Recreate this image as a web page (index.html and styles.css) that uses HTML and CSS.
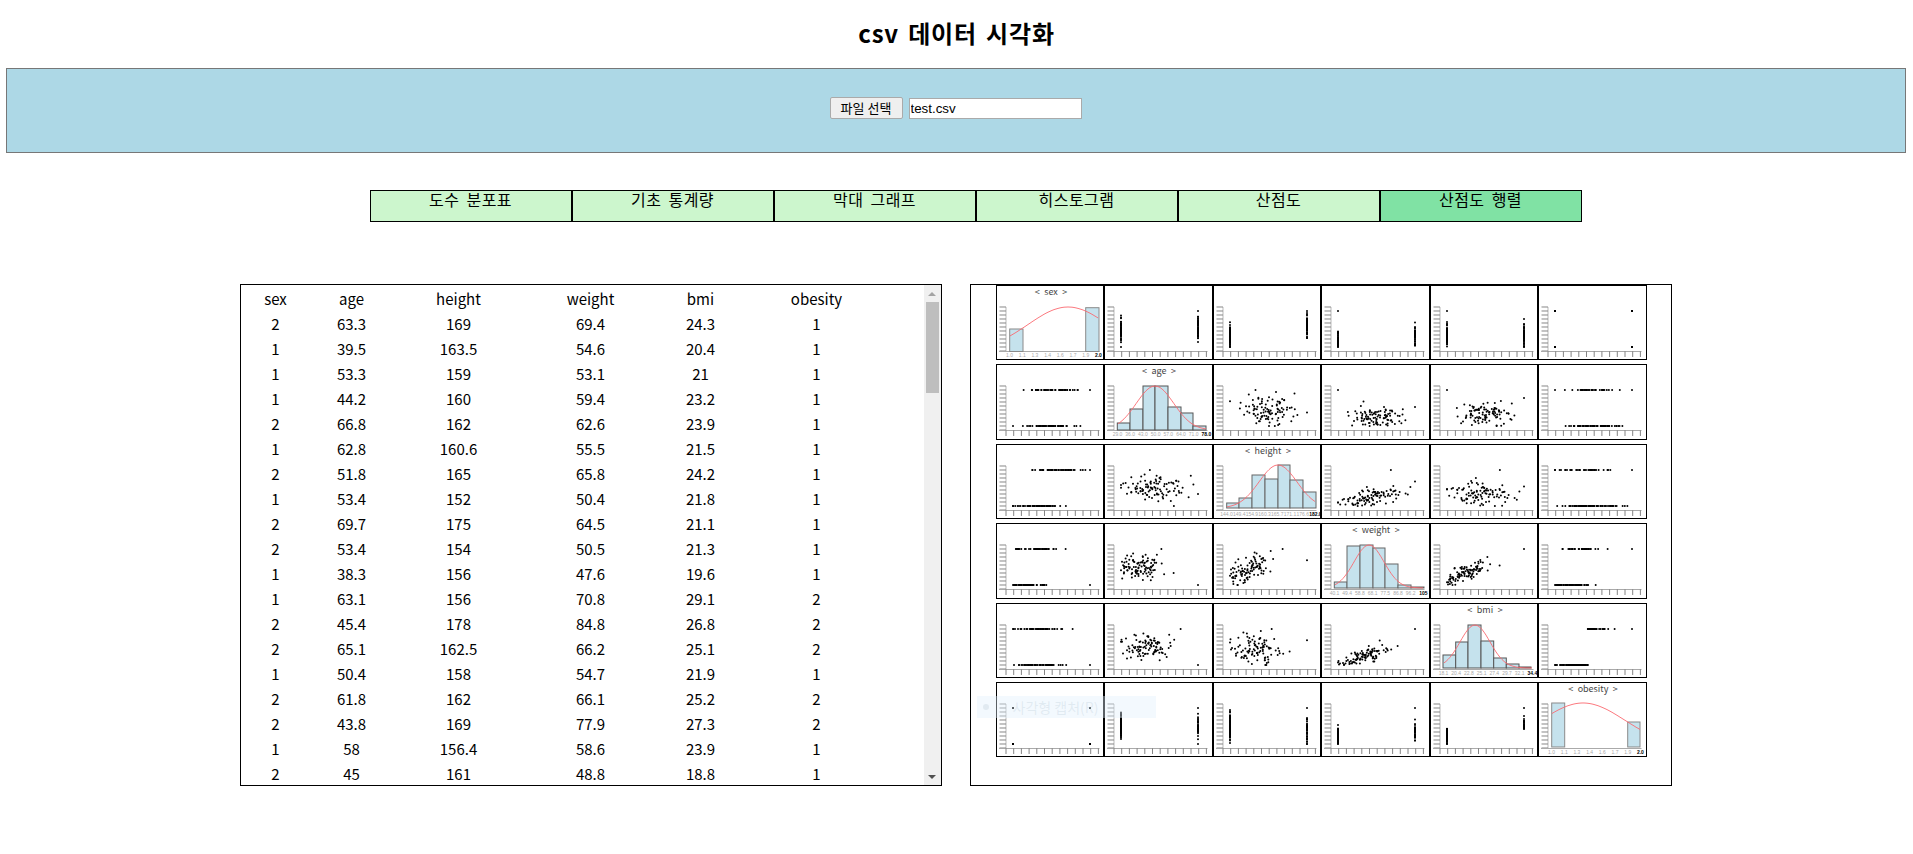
FILE: index.html
```html
<!DOCTYPE html>
<html>
<head>
  <meta charset="utf-8">
  <meta name="viewport" content="width=device-width, initial-scale=1.0">
  <link rel="stylesheet" href="styles.css">
</head>
<body>
  <h1 class="page_title">csv 데이터 시각화</h1>

  <div class="file_bar">
    <button class="file_button">파일 선택</button>
    <input class="file_name" type="text" value="test.csv" readonly>
  </div>

  <ul class="tabs">
    <li class="tab">도수 분포표</li>
    <li class="tab">기초 통계량</li>
    <li class="tab">막대 그래프</li>
    <li class="tab">히스토그램</li>
    <li class="tab">산점도</li>
    <li class="tab tab_active">산점도 행렬</li>
  </ul>

  <div class="panels">
    <div class="panel table_panel">
      <div class="table_area">
        <table class="data_table">
          <colgroup>
            <col class="col_sex">
            <col class="col_age">
            <col class="col_height">
            <col class="col_weight">
            <col class="col_bmi">
            <col class="col_obesity">
          </colgroup>
          <thead>
            <tr><th>sex</th><th>age</th><th>height</th><th>weight</th><th>bmi</th><th>obesity</th></tr>
          </thead>
          <tbody id="table_body"></tbody>
        </table>
      </div>
      <div class="scrollbar">
        <div class="scroll_button"><span class="arrow_up"></span></div>
        <div class="scroll_track"><div class="scroll_thumb"></div></div>
        <div class="scroll_button"><span class="arrow_down"></span></div>
      </div>
    </div>
    <div class="panel matrix_panel">
      <div class="matrix" id="matrix"></div>
      <div class="capture_hint"><span class="capture_dot"></span>사각형 캡처(R)</div>
    </div>
  </div>
  <script src="app.js"></script>
</body>
</html>
```

FILE: styles.css
```css
body {
  margin: 0;
  background-color: #fff;
  color: #000;
  font-family: "Noto Sans CJK KR", sans-serif;
  font-size: 16px;
}
.page_title {
  margin: 0;
  height: 68px;
  line-height: 66px;
  text-align: center;
  font-size: 24px;
  font-weight: bold;
  letter-spacing: 0.8px;
  word-spacing: 3px;
}
.file_bar {
  display: flex;
  justify-content: center;
  align-items: flex-start;
  gap: 6px;
  box-sizing: border-box;
  height: 85px;
  margin: 0 7px 0 6px;
  padding: 28px 1px 0 0;
  background-color: #add8e6;
  border: 1px solid #777;
}
.file_button {
  box-sizing: border-box;
  width: 73px;
  height: 22px;
  padding: 0;
  background-color: #efefef;
  border: 1px solid #aaa;
  border-radius: 2px;
  font-family: "Noto Sans CJK KR", sans-serif;
  font-size: 13px;
  line-height: 18px;
}
.file_name {
  box-sizing: border-box;
  width: 173px;
  height: 21px;
  margin-top: 1px;
  padding: 0 1px;
  background-color: #fff;
  border: 1px solid #aaa;
  font-family: "Liberation Sans", sans-serif;
  font-size: 13.33px;
}
.tabs {
  display: flex;
  justify-content: center;
  margin: 37px 0 0;
  padding: 0 0 0 38px;
  list-style: none;
}
.tab {
  box-sizing: border-box;
  width: 202px;
  height: 32px;
  line-height: 17px;
  text-align: center;
  background-color: #ccf6cd;
  border: 1px solid #000;
  letter-spacing: 0.5px;
  word-spacing: 3px;
}
.tab_active {
  background-color: #80e2a4;
}
.panels {
  display: flex;
  justify-content: center;
  gap: 28px;
  margin-top: 62px;
  padding-right: 2px;
}
.panel {
  box-sizing: border-box;
  width: 702px;
  height: 502px;
  border: 1px solid #000;
}
.table_panel {
  display: flex;
}
.table_area {
  flex: 1;
  padding: 1px 0 0 2px;
}
.scrollbar {
  display: flex;
  flex-direction: column;
  width: 17px;
  background-color: #f0f0f0;
}
.scroll_button {
  display: flex;
  justify-content: center;
  align-items: center;
  height: 17px;
}
.arrow_up {
  border-left: 4px solid transparent;
  border-right: 4px solid transparent;
  border-bottom: 4px solid #a3a3a3;
}
.arrow_down {
  border-left: 4px solid transparent;
  border-right: 4px solid transparent;
  border-top: 4px solid #505050;
}
.scroll_track {
  flex: 1;
}
.scroll_thumb {
  height: 91px;
  margin: 0 2px;
  background-color: #bebebe;
}
.data_table {
  width: 648px;
  border-collapse: collapse;
  table-layout: fixed;
  font-size: 15px;
}
.data_table th,
.data_table td {
  height: 25px;
  padding: 0;
  text-align: center;
  font-weight: normal;
  line-height: 20px;
}
.col_sex { width: 66px; }
.col_age { width: 86px; }
.col_height { width: 128px; }
.col_weight { width: 136px; }
.col_bmi { width: 84px; }
.col_obesity { width: 148px; }
.matrix_panel {
  position: relative;
  padding-left: 25px;
}
.matrix {
  display: grid;
  grid-template-columns: repeat(6, 108.5px);
  grid-auto-rows: 75.4px;
  row-gap: 4px;
}
.plot_cell {
  box-sizing: border-box;
  border: 1px solid #000;
  background-color: #fff;
}
.plot_cell svg {
  display: block;
  width: 100%;
  height: 100%;
}
.plot_title {
  font-family: "Noto Sans CJK KR", sans-serif;
  font-size: 9px;
  word-spacing: 2.5px;
  fill: #444;
  text-anchor: middle;
}
.bin_label {
  font-family: "Liberation Sans", sans-serif;
  font-size: 5px;
  fill: #aaa;
  text-anchor: middle;
}
.bin_label_last {
  font-weight: bold;
  fill: #000;
}
.capture_hint {
  position: absolute;
  left: 6px;
  top: 411px;
  display: flex;
  align-items: center;
  width: 179px;
  height: 22px;
  background-color: rgba(225, 240, 252, 0.4);
  color: rgba(170, 190, 205, 0.25);
  font-size: 14px;
}
.capture_dot {
  width: 6px;
  height: 6px;
  margin: 0 24px 0 6px;
  border-radius: 50%;
  background-color: rgba(170, 190, 205, 0.25);
}
```

FILE: app.js
```js
// rows that show in the table without scrolling
var first_rows = [
  [2, 63.3, 169, 69.4, 24.3, 1],
  [1, 39.5, 163.5, 54.6, 20.4, 1],
  [1, 53.3, 159, 53.1, 21, 1],
  [1, 44.2, 160, 59.4, 23.2, 1],
  [2, 66.8, 162, 62.6, 23.9, 1],
  [1, 62.8, 160.6, 55.5, 21.5, 1],
  [2, 51.8, 165, 65.8, 24.2, 1],
  [1, 53.4, 152, 50.4, 21.8, 1],
  [2, 69.7, 175, 64.5, 21.1, 1],
  [2, 53.4, 154, 50.5, 21.3, 1],
  [1, 38.3, 156, 47.6, 19.6, 1],
  [1, 63.1, 156, 70.8, 29.1, 2],
  [2, 45.4, 178, 84.8, 26.8, 2],
  [2, 65.1, 162.5, 66.2, 25.1, 2],
  [1, 50.4, 158, 54.7, 21.9, 1],
  [2, 61.8, 162, 66.1, 25.2, 2],
  [2, 43.8, 169, 77.9, 27.3, 2],
  [1, 58, 156.4, 58.6, 23.9, 1],
  [2, 45, 161, 48.8, 18.8, 1]
];

// histogram of each column, in svg units of one cell
var hists = [
  { title: "< sex >", edges: [13.7, 27, 89.7, 103], tops: [44, null, 22.7], base: 66.5, mu: 72, sigma: 40, peak: 22, stroke: "#8a8a8a",
    labels: ["1.0", "1.1", "1.3", "1.4", "1.6", "1.7", "1.9", "2.0"] },
  { title: "< age >", edges: [13.3, 26, 39, 51, 64, 77, 89, 102], tops: [59, 45, 22, 22, 43, 49, 62], base: 66, mu: 51, sigma: 18.7, peak: 22, stroke: "#555",
    labels: ["29.0", "36.0", "43.0", "50.0", "57.0", "64.0", "71.0", "78.0"] },
  { title: "< height >", edges: [13.7, 26, 39, 52, 65, 77, 90, 103], tops: [59, 54, 31, 35, 21, 36, 48], base: 64, mu: 65, sigma: 19, peak: 21, stroke: "#666",
    labels: ["144.0", "149.4", "154.9", "160.3", "165.7", "171.1", "176.6", "182.0"] },
  { title: "< weight >", edges: [13.3, 26, 39, 52, 64, 77, 90, 103], tops: [59, 23, 22, 25, 41, 62, 64], base: 65, mu: 48, sigma: 15, peak: 22, stroke: "#666",
    labels: ["40.1", "49.4", "58.8", "68.1", "77.5", "86.8", "96.2", "105"] },
  { title: "< bmi >", edges: [13, 25.7, 38, 51, 63.7, 76.3, 89, 101], tops: [52, 39, 22, 38, 55, 61, 64], base: 65, mu: 45, sigma: 15, peak: 22, stroke: "#555",
    labels: ["18.1", "20.4", "22.8", "25.1", "27.4", "29.7", "32.1", "34.4"] },
  { title: "< obesity >", edges: [13.7, 26.7, 89.7, 102], tops: [21, null, 40], base: 65, mu: 45, sigma: 42, peak: 21, stroke: "#8a8a8a",
    labels: ["1.0", "1.1", "1.3", "1.4", "1.6", "1.7", "1.9", "2.0"] }
];

var seed = 4217;
function rand() {
  seed = (seed * 16807) % 2147483647;
  return seed / 2147483647;
}
function gauss() {
  return Math.sqrt(-2 * Math.log(rand())) * Math.cos(2 * Math.PI * rand());
}
function round1(v) {
  return Math.round(v * 10) / 10;
}

// the rows below the fold are not in the picture, these only feed the plots
function make_rows() {
  var rows = first_rows.slice();
  while (rows.length < 100) {
    var sex = rand() < 0.5 ? 1 : 2;
    var age = 53 + gauss() * 10;
    var height = 161 + (sex == 2 ? 5 : -5) + gauss() * 5.5 - (age - 53) * 0.3;
    var bmi = 23.7 + gauss() * 2.6;
    var weight = bmi * height * height / 10000;
    age = Math.min(76, Math.max(31, age));
    height = Math.min(181, Math.max(146, height));
    rows.push([sex, round1(age), round1(height), round1(weight), round1(bmi), bmi >= 25 ? 2 : 1]);
  }
  rows.push([2, 77.5, 158, 76, 30.4, 2]);
  rows.push([1, 29.5, 168, 102.5, 33.9, 2]);
  return rows;
}

function axes(with_ticks) {
  var out = '<path d="M10 22V66.5" stroke="#c4c4c4" stroke-width="1.2" fill="none"/>';
  var d = "";
  for (var y = 22; y <= 66; y += 4) {
    d += "M3.5 " + y + "H10";
  }
  out += '<path d="' + d + '" stroke="#888" stroke-width="1" fill="none"/>';
  out += '<path d="M3 66.5H103.5" stroke="#aaa" stroke-width="1.2" fill="none"/>';
  if (with_ticks) {
    d = "";
    for (var x = 10; x <= 104; x += 7.7) {
      d += "M" + x.toFixed(1) + " 66.5V72";
    }
    out += '<path d="' + d + '" stroke="#666" stroke-width="0.8" fill="none"/>';
  }
  return out;
}

function hist_svg(h) {
  var out = axes(false);
  out += '<text class="plot_title" x="55" y="10">' + h.title.replace("<", "&lt;").replace(">", "&gt;") + "</text>";
  for (var i = 0; i < h.tops.length; i++) {
    if (h.tops[i] === null) {
      continue;
    }
    out += '<rect x="' + h.edges[i] + '" y="' + h.tops[i] + '" width="' + (h.edges[i + 1] - h.edges[i]) + '" height="' + (h.base - h.tops[i]) +
      '" fill="#c5e2ed" stroke="' + h.stroke + '" stroke-width="1"/>';
  }
  var d = "";
  for (var x = 14; x <= 103; x += 2) {
    var y = h.base - (h.base - h.peak) * Math.exp(-(x - h.mu) * (x - h.mu) / (2 * h.sigma * h.sigma));
    d += (x == 14 ? "M" : "L") + x + " " + y.toFixed(1);
  }
  out += '<path d="' + d + '" stroke="#fb6a70" stroke-width="0.9" fill="none"/>';
  for (var j = 0; j < h.labels.length; j++) {
    var last = j == h.labels.length - 1;
    out += '<text class="bin_label' + (last ? " bin_label_last" : "") + '" x="' + (13.5 + j * 12.7).toFixed(1) + '" y="72">' + h.labels[j] + "</text>";
  }
  return out;
}

function scatter_svg(rows, col_x, col_y, lo, hi) {
  var out = axes(true);
  for (var i = 0; i < rows.length; i++) {
    var px = 17 + (rows[i][col_x] - lo[col_x]) / (hi[col_x] - lo[col_x]) * 77;
    var py = 62 - (rows[i][col_y] - lo[col_y]) / (hi[col_y] - lo[col_y]) * 36;
    out += '<circle cx="' + px.toFixed(1) + '" cy="' + py.toFixed(1) + '" r="1"/>';
  }
  return out;
}

var rows = make_rows();

var table_html = "";
first_rows.forEach(function(row) {
  table_html += "<tr><td>" + row.join("</td><td>") + "</td></tr>";
});
document.getElementById("table_body").innerHTML = table_html;

var lo = [], hi = [];
for (var c = 0; c < 6; c++) {
  var values = rows.map(function(row) { return row[c]; });
  lo.push(Math.min.apply(null, values));
  hi.push(Math.max.apply(null, values));
}

var matrix_html = "";
for (var r = 0; r < 6; r++) {
  for (var k = 0; k < 6; k++) {
    var inner = r == k ? hist_svg(hists[r]) : scatter_svg(rows, r, k, lo, hi);
    matrix_html += '<div class="plot_cell"><svg viewBox="1 1 106.5 73.4" preserveAspectRatio="none">' + inner + "</svg></div>";
  }
}
document.getElementById("matrix").innerHTML = matrix_html;
```
